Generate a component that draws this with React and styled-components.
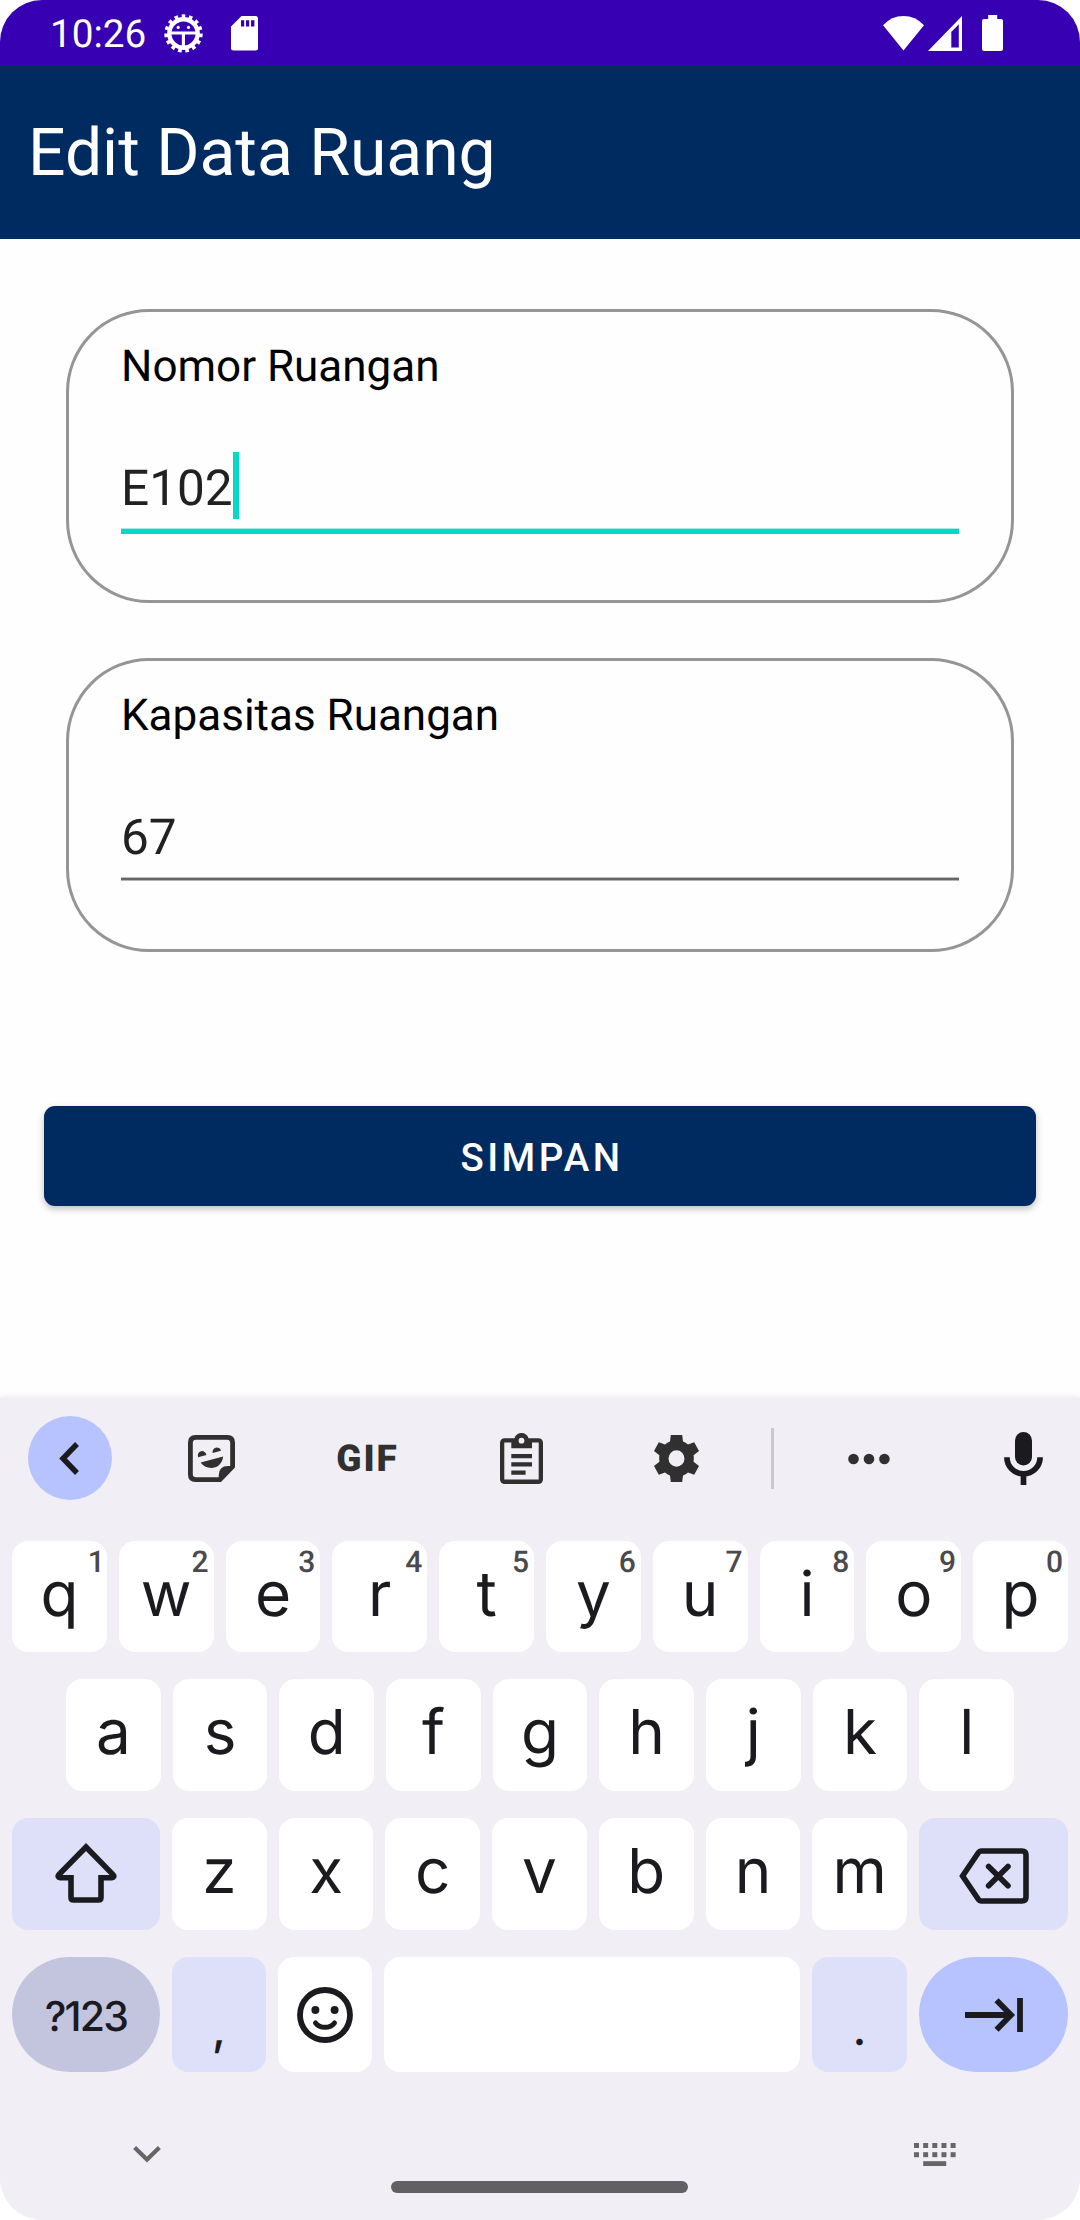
import React from "react";
import styled, { createGlobalStyle } from "styled-components";

const GlobalStyle = createGlobalStyle`
  *, *::before, *::after { box-sizing: border-box; }
  html, body { margin: 0; padding: 0; background: #fff; }
  svg { display: block; flex: none; }
`;

const colors = {
  status: "#3700b3",
  navy: "#002b61",
  teal: "#03dac5",
  board: "#f1eff5",
  key: "#ffffff",
  soft: "#dee0fa",
  mode: "#c3c5df",
  accent: "#b6c3ff",
  ink: "#1b1b1f",
  tool: "#303030",
};

const Screen = styled.div`
  width: 1080px;
  height: 2220px;
  display: flex;
  flex-direction: column;
  overflow: hidden;
  border-radius: 42px;
  background: #fefefe;
  font-family: Roboto, "Liberation Sans", sans-serif;
  text-rendering: geometricPrecision;
`;

const StatusBar = styled.header`
  height: 66px;
  display: flex;
  align-items: center;
  padding: 0 77px 0 50px;
  background: ${colors.status};
  color: #fff;
`;

const Clock = styled.span`
  width: 114px;
  font-size: 38.7px;
  line-height: 46px;
  padding-top: 3px;
`;

const Notifications = styled.div`
  display: flex;
  align-items: center;
  gap: 28px;
`;

const SystemIcons = styled.div`
  display: flex;
  align-items: center;
  margin-left: auto;
`;

const Battery = styled.div`
  margin-left: 20px;
`;

const AppBar = styled.div`
  height: 173px;
  padding: 49px 0 0 28px;
  background: ${colors.navy};
`;

const Title = styled.h1`
  margin: 0;
  font-size: 66px;
  font-weight: 400;
  line-height: 77px;
  color: #fff;
`;

const Form = styled.main`
  flex: 1;
  display: flex;
  flex-direction: column;
  padding: 70px 44px 0;
`;

const Fields = styled.div`
  display: flex;
  flex-direction: column;
  gap: 55px;
  padding: 0 22px;
`;

const Card = styled.section`
  height: 294px;
  padding: 28px 52px 0;
  border: 3px solid #959595;
  border-radius: 83px;
`;

const Label = styled.label`
  display: block;
  height: 112px;
  font-size: 44px;
  line-height: 52px;
  color: #000;
`;

const Value = styled.div`
  display: flex;
  align-items: flex-start;
  height: 76px;
  font-size: 49.5px;
  line-height: 74px;
  color: #212121;
`;

const Caret = styled.span`
  width: 6px;
  height: 67px;
  background: ${colors.teal};
`;

const Underline = styled.div`
  height: ${(p) => (p.$focused ? "6px" : "4px")};
  background: ${(p) =>
    p.$focused
      ? `linear-gradient(#a9ebe3 1px, ${colors.teal} 1px)`
      : "linear-gradient(#c0c0c0 1px, #666 1px, #666 3px, #b4b4b4 3px)"};
`;

const SaveButton = styled.button`
  height: 100px;
  margin-top: 154px;
  padding: 3px 0 0 4px;
  border: 0;
  border-radius: 11px;
  background: ${colors.navy};
  color: #fff;
  font: 500 38.5px/46px Roboto, "Liberation Sans", sans-serif;
  letter-spacing: 3.44px;
  box-shadow: 0 3px 7px rgba(0, 0, 0, 0.25);
`;

const Keyboard = styled.footer`
  height: 822px;
  display: flex;
  flex-direction: column;
  padding-top: 18px;
  background: ${colors.board};
  box-shadow: 0 0 6px rgba(60, 50, 80, 0.14);
  font-family: Inter, Roboto, sans-serif;
  color: ${colors.ink};
`;

const Toolbar = styled.div`
  height: 84px;
  display: flex;
  align-items: center;
  padding-left: 28px;
  margin-bottom: 41px;
`;

const BackCircle = styled.div`
  width: 84px;
  height: 84px;
  margin-right: 22px;
  padding-right: 2px;
  display: grid;
  place-items: center;
  border-radius: 50%;
  background: ${colors.accent};
`;

const Tool = styled.div`
  width: 155px;
  display: flex;
  justify-content: center;
  padding-top: 1px;
`;

const GifLabel = styled.span`
  font: 900 37px/40px Roboto, sans-serif;
  letter-spacing: 2px;
  padding: 2px 0 0 2px;
  color: ${colors.tool};
`;

const Divider = styled.div`
  width: 3px;
  height: 61px;
  margin: 0 17px;
  background: #cac8ce;
`;

const Mic = styled.div`
  margin-left: 58px;
`;

const Rows = styled.div`
  display: flex;
  flex-direction: column;
  gap: 27px;
`;

const Row = styled.div`
  height: ${(p) => p.$height}px;
  display: flex;
  gap: 12px;
  padding: 0 ${(p) => p.$inset || 12}px;
`;

const Key = styled.div`
  position: relative;
  flex: ${(p) => (p.$width ? `0 0 ${p.$width}px` : "1 1 0")};
  display: flex;
  align-items: center;
  justify-content: center;
  border-radius: ${(p) => (p.$pill ? "58px" : "16px")};
  background: ${(p) => p.$bg || colors.key};
`;

const Letter = styled.span`
  font-size: 62px;
  line-height: 74px;
  padding-bottom: 6px;
`;

const Hint = styled.span`
  position: absolute;
  top: 4px;
  right: ${(p) => (p.$narrow ? 2 : 5)}px;
  font-family: Roboto, sans-serif;
  font-size: 30px;
  font-weight: 500;
  line-height: 36px;
  color: #4a4a4d;
`;

const ModeText = styled.span`
  font-size: 41px;
  font-weight: 500;
  line-height: 50px;
  letter-spacing: -1.8px;
  padding-top: 3px;
`;

const Punctuation = styled.span`
  font-size: 46px;
  font-weight: 500;
  line-height: 56px;
  padding-top: 29px;
`;

const NavRow = styled.div`
  height: 23px;
  display: flex;
  align-items: center;
  justify-content: space-between;
  margin-top: 71px;
  padding: 0 124px 0 133px;
`;

const HomeBar = styled.div`
  width: 297px;
  height: 12px;
  margin: 15px 0 0 391px;
  border-radius: 6px;
  background: #616163;
`;

const DebugIcon = () => (
  <svg width="39" height="39" viewBox="0 0 39 39" fill="none" stroke="#fff">
    <circle cx="19.5" cy="19.5" r="14.2" strokeWidth="4.4" />
    <circle cx="19.5" cy="19.5" r="17.4" strokeWidth="3.6" pathLength="150" strokeDasharray="5 5" />
    <path d="M7 19h25M19.4 19v13" strokeWidth="3.1" />
    <circle cx="14.2" cy="13.4" r="1.6" fill="#fff" stroke="none" />
    <circle cx="24.5" cy="13.4" r="1.6" fill="#fff" stroke="none" />
  </svg>
);

const SdCardIcon = () => (
  <svg width="27" height="35" viewBox="0 0 27 35" fill="#fff">
    <path
      fillRule="evenodd"
      d="M10.5 0H24.5Q27 0 27 2.5V32Q27 34.5 24.5 34.5H2.5Q0 34.5 0 32V10.5ZM10 4.2V10.5H13.2V4.2ZM15 4.2V10.5H18.2V4.2ZM20 4.2V10.5H23.4V4.2Z"
    />
  </svg>
);

const WifiIcon = () => (
  <svg width="41" height="35" viewBox="0 0 41 35" fill="#fff">
    <path d="M0 9.3Q8.5 0 20.5 0T41 9.3L20.5 34.6Z" />
  </svg>
);

const SignalIcon = () => (
  <svg width="38" height="35" viewBox="-4 0 38 35" fill="#fff">
    <path fillRule="evenodd" d="M34 0V35H0ZM30.8 8.3L23.3 16V31.5H30.8Z" />
  </svg>
);

const BatteryIcon = () => (
  <svg width="21" height="36" viewBox="0 0 21 36" fill="#fff">
    <path d="M6.2 0H15.2V4H19Q21 4 21 6V34Q21 36 19 36H2Q0 36 0 34V6Q0 4 2 4H6.2Z" />
  </svg>
);

const BackIcon = () => (
  <svg width="20" height="33" viewBox="0 0 20 33" fill="none" stroke={colors.ink} strokeWidth="5.4">
    <path d="M18 2L4 16.5L18 31" />
  </svg>
);

const StickerIcon = () => (
  <svg width="47" height="47" viewBox="0 0 47 47" fill={colors.tool}>
    <path
      fillRule="evenodd"
      d="M7.5 0H39.5Q47 0 47 7.5V32.5L33 47H7.5Q0 47 0 39.5V7.5Q0 0 7.5 0ZM8 4.7Q4.8 4.7 4.8 8V39Q4.8 42.3 8 42.3H30.7V40.5Q30.7 31 40 31H42.2V8Q42.2 4.7 39 4.7Z"
    />
    <path d="M10.2 22.2A4.3 4.3 0 1 1 18.4 20Z" />
    <path d="M24.7 18A4.3 4.3 0 1 1 33 15.7Z" />
    <path d="M12.6 27.6L35.2 21.6C34.5 28 30 32.8 24 33C19 33.2 15 31.4 12.6 27.6Z" />
  </svg>
);

const ClipboardIcon = () => (
  <svg width="43" height="51" viewBox="0 0 43 51" fill={colors.tool}>
    <path
      fillRule="evenodd"
      d="M5 5.2H14.5C15.4 2 18 0 21.5 0S27.6 2 28.5 5.2H38Q43 5.2 43 10.2V46Q43 51 38 51H5Q0 51 0 46V10.2Q0 5.2 5 5.2ZM4.3 9.6V46.6H38.7V9.6H32V15.2H11.3V9.6ZM21.5 4.8A2.9 2.9 0 1 0 21.5 10.6A2.9 2.9 0 1 0 21.5 4.8Z"
    />
    <path d="M11.3 21H32V25.3H11.3ZM11.3 29.3H32V33.6H11.3ZM11.3 37.5H25.6V41.8H11.3Z" />
  </svg>
);

const GearIcon = () => (
  <svg width="45" height="47" viewBox="0 0 45 47" fill={colors.tool}>
    <path
      fillRule="evenodd"
      d="M16.8 0H28.2L29 6.6Q31.8 7.8 34 9.6L40.2 7.2L45 16.1L39.6 20.3Q40.1 23.5 39.6 26.7L45 30.9L40.2 39.8L34 37.4Q31.8 39.2 29 40.4L28.2 47H16.8L16 40.4Q13.2 39.2 11 37.4L4.8 39.8L0 30.9L5.4 26.7Q4.9 23.5 5.4 20.3L0 16.1L4.8 7.2L11 9.6Q13.2 7.8 16 6.6ZM22.5 15.2A8 8.3 0 1 0 22.5 31.8A8 8.3 0 1 0 22.5 15.2Z"
    />
  </svg>
);

const MoreIcon = () => (
  <svg width="42" height="12" viewBox="0 0 42 12" fill={colors.tool}>
    <circle cx="5.5" cy="6" r="5.3" />
    <circle cx="21" cy="6" r="5.3" />
    <circle cx="36.4" cy="6" r="5.3" />
  </svg>
);

const MicIcon = () => (
  <svg width="39" height="53" viewBox="0 0 39 53" fill={colors.ink}>
    <rect x="11" y="0" width="17" height="33.6" rx="8.5" />
    <path d="M2.9 25.2A16.6 16.6 0 0 0 36.1 25.2M19.5 41V53" fill="none" stroke={colors.ink} strokeWidth="5.7" />
  </svg>
);

const ShiftIcon = () => (
  <svg width="62" height="62" viewBox="0 0 62 62" fill="none" stroke={colors.ink} strokeWidth="5.6">
    <path d="M31 4L58 31.6C59.6 33.2 58.6 34.7 57 34.7H46V54.5Q46 57 43.5 57H18.5Q16 57 16 54.5V34.7H5C3.4 34.7 2.4 33.2 4 31.6Z" />
  </svg>
);

const BackspaceIcon = () => (
  <svg width="70" height="60" viewBox="0 -4 70 60" fill="none" stroke={colors.ink} strokeWidth="5.6">
    <path d="M22.5 3H63Q67 3 67 7V49Q67 53 63 53H22.5Q20.5 53 19.3 51.2L3.6 28L19.3 4.8Q20.5 3 22.5 3Z" />
    <path d="M29.6 18.4L49 37.8M49 18.4L29.6 37.8" strokeLinecap="round" />
  </svg>
);

const EmojiIcon = () => (
  <svg width="56" height="56" viewBox="0 0 56 56" fill="none" stroke={colors.ink} strokeWidth="5.8">
    <circle cx="28" cy="28" r="25" />
    <path d="M18.5 36C23 41.8 33 41.8 37.5 36" strokeWidth="5" strokeLinecap="round" />
    <circle cx="18.4" cy="23" r="4" fill={colors.ink} stroke="none" />
    <circle cx="37.6" cy="23" r="4" fill={colors.ink} stroke="none" />
  </svg>
);

const NextIcon = () => (
  <svg width="58" height="34" viewBox="0 0 58 34" fill="none" stroke={colors.ink} strokeWidth="5.8">
    <path d="M0 17H45M31.5 2.2L46 17L31.5 31.8M55 0V34" />
  </svg>
);

const CollapseIcon = () => (
  <svg width="28" height="17" viewBox="0 0 28 17" fill="none" stroke="#666" strokeWidth="4.2">
    <path d="M1.6 1.6L14 13.6L26.4 1.6" />
  </svg>
);

const SwitchKeyboardIcon = () => (
  <svg width="42" height="23" viewBox="0 0 42 23" fill="#666">
    {[0, 9.15, 18.3, 27.45, 36.6].map((x) => (
      <React.Fragment key={x}>
        <rect x={x} y="0" width="5" height="5" />
        <rect x={x} y="9.2" width="5" height="5" />
      </React.Fragment>
    ))}
    <rect x="9.2" y="18.2" width="23" height="4.8" />
  </svg>
);

const Field = ({ label, value, focused }) => (
  <Card>
    <Label>{label}</Label>
    <Value>
      {value}
      {focused && <Caret />}
    </Value>
    <Underline $focused={focused} />
  </Card>
);

const letters = (text) =>
  [...text].map((c) => (
    <Key key={c}>
      <Letter>{c}</Letter>
    </Key>
  ));

export default function App() {
  return (
    <Screen>
      <GlobalStyle />
      <StatusBar>
        <Clock>10:26</Clock>
        <Notifications>
          <DebugIcon />
          <SdCardIcon />
        </Notifications>
        <SystemIcons>
          <WifiIcon />
          <SignalIcon />
          <Battery>
            <BatteryIcon />
          </Battery>
        </SystemIcons>
      </StatusBar>
      <AppBar>
        <Title>Edit Data Ruang</Title>
      </AppBar>
      <Form>
        <Fields>
          <Field label="Nomor Ruangan" value="E102" focused />
          <Field label="Kapasitas Ruangan" value="67" />
        </Fields>
        <SaveButton>SIMPAN</SaveButton>
      </Form>
      <Keyboard>
        <Toolbar>
          <BackCircle>
            <BackIcon />
          </BackCircle>
          <Tool><StickerIcon /></Tool>
          <Tool><GifLabel>GIF</GifLabel></Tool>
          <Tool><ClipboardIcon /></Tool>
          <Tool><GearIcon /></Tool>
          <Divider />
          <Tool><MoreIcon /></Tool>
          <Mic><MicIcon /></Mic>
        </Toolbar>
        <Rows>
          <Row $height={111}>
            {[..."qwertyuiop"].map((c, i) => (
              <Key key={c}>
                <Letter>{c}</Letter>
                <Hint $narrow={i === 0}>{(i + 1) % 10}</Hint>
              </Key>
            ))}
          </Row>
          <Row $height={112} $inset={66}>{letters("asdfghjkl")}</Row>
          <Row $height={112}>
            <Key $width={148} $bg={colors.soft}><ShiftIcon /></Key>
            {letters("zxcvbnm")}
            <Key $width={149} $bg={colors.soft}><BackspaceIcon /></Key>
          </Row>
          <Row $height={115}>
            <Key $width={148} $bg={colors.mode} $pill><ModeText>?123</ModeText></Key>
            <Key $width={94} $bg={colors.soft}><Punctuation>,</Punctuation></Key>
            <Key $width={94}><EmojiIcon /></Key>
            <Key />
            <Key $width={95} $bg={colors.soft}><Punctuation>.</Punctuation></Key>
            <Key $width={149} $bg={colors.accent} $pill><NextIcon /></Key>
          </Row>
        </Rows>
        <NavRow>
          <CollapseIcon />
          <SwitchKeyboardIcon />
        </NavRow>
        <HomeBar />
      </Keyboard>
    </Screen>
  );
}
